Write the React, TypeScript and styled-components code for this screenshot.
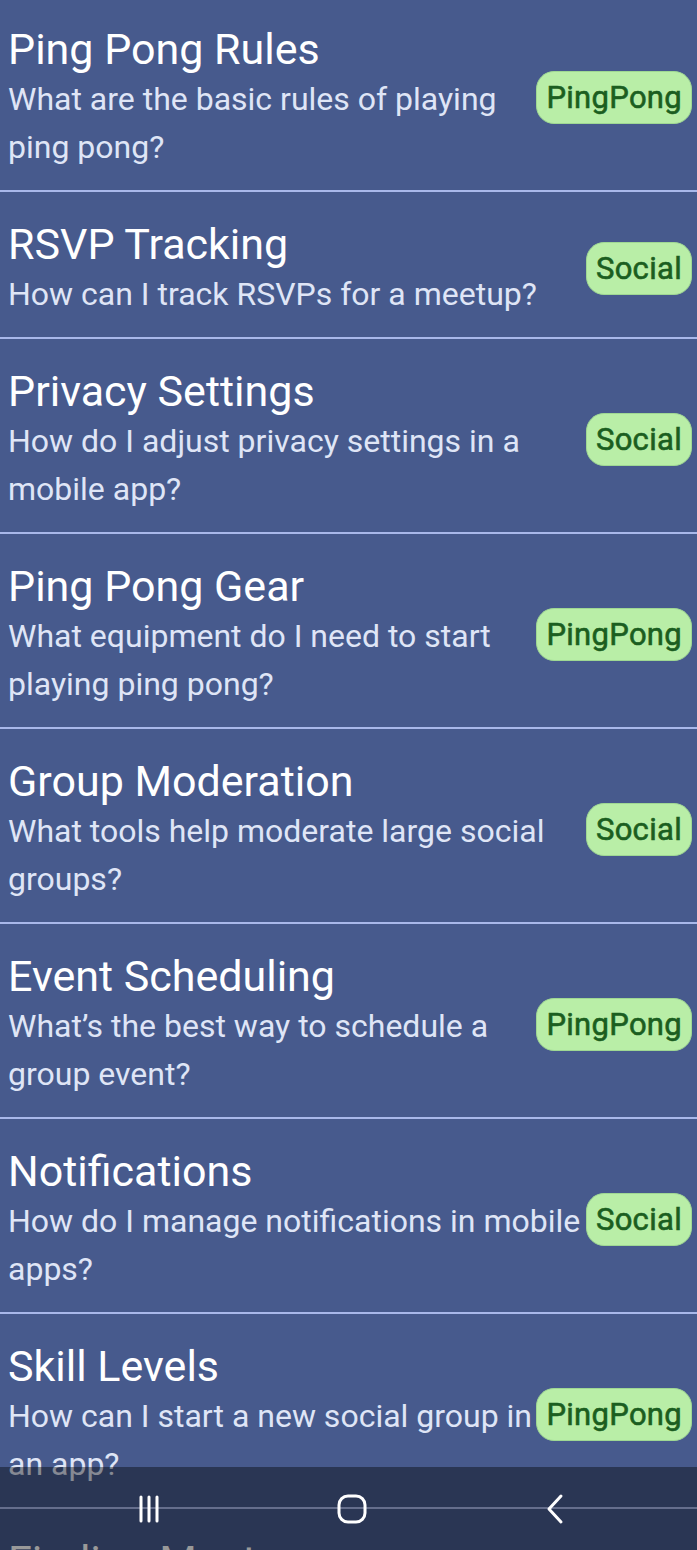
import React from "react";
import styled, { createGlobalStyle } from "styled-components";

const GlobalStyle = createGlobalStyle`
  html, body {
    margin: 0;
    padding: 0;
    background: #475a8d;
  }
  body {
    font-family: Roboto, "Noto Sans", "Liberation Sans", sans-serif;
    -webkit-font-smoothing: antialiased;
  }
`;

const Screen = styled.div`
  width: 697px;
  height: 1550px;
  overflow: hidden;
  background: #475a8d;
  position: relative;
`;

const List = styled.ul`
  list-style: none;
  margin: -3px 0 0 0;
  padding: 0;
`;

const Row = styled.li`
  display: flex;
  align-items: center;
  padding: 26px 5px 19px 8px;
  border-bottom: 2px solid #a9b8ea;
`;

const TextCol = styled.div`
  flex: 1;
  min-width: 0;
  display: flex;
  flex-direction: column;
`;

const Title = styled.div`
  color: #ffffff;
  font-size: 43px;
  line-height: 52px;
  font-weight: 400;
`;

const Desc = styled.div`
  color: #dfe5f6;
  font-size: 32px;
  line-height: 48px;
  font-weight: 400;
`;

const Badge = styled.span<{ $kind: "PingPong" | "Social" }>`
  flex: none;
  display: inline-flex;
  align-items: center;
  height: 53px;
  box-sizing: border-box;
  padding: 0 9px;
  border-radius: 18px;
  background: #b9eea7;
  border: 1px solid #9fd893;
  color: #1b5e20;
  font-size: 31px;
  font-weight: 400;
  -webkit-text-stroke: 0.6px #1b5e20;
  letter-spacing: 0.3px;
`;

const NavBar = styled.nav`
  position: fixed;
  left: 0;
  right: 0;
  bottom: 0;
  height: 83px;
  background: rgba(0, 0, 0, 0.4);
  display: flex;
  justify-content: center;
  align-items: center;
  padding-left: 7px;
`;

const NavButton = styled.div`
  width: 203px;
  height: 83px;
  display: flex;
  align-items: center;
  justify-content: center;
`;

type Item = { title: string; desc: string; tag: "PingPong" | "Social" };

const items: Item[] = [
  { title: "Ping Pong Rules", desc: "What are the basic rules of playing ping pong?", tag: "PingPong" },
  { title: "RSVP Tracking", desc: "How can I track RSVPs for a meetup?", tag: "Social" },
  { title: "Privacy Settings", desc: "How do I adjust privacy settings in a mobile app?", tag: "Social" },
  { title: "Ping Pong Gear", desc: "What equipment do I need to start playing ping pong?", tag: "PingPong" },
  { title: "Group Moderation", desc: "What tools help moderate large social groups?", tag: "Social" },
  { title: "Event Scheduling", desc: "What\u2019s the best way to schedule a group event?", tag: "PingPong" },
  { title: "Notifications", desc: "How do I manage notifications in mobile apps?", tag: "Social" },
  { title: "Skill Levels", desc: "How can I start a new social group in an app?", tag: "PingPong" },
  { title: "Finding Meetups", desc: "How do I find meetups near me?", tag: "Social" },
];

const RecentsIcon = () => (
  <svg width="30" height="30" viewBox="0 0 30 30" fill="none" stroke="#fff" strokeWidth="3" strokeLinecap="round">
    <line x1="7" y1="3" x2="7" y2="27" />
    <line x1="15" y1="3" x2="15" y2="27" />
    <line x1="23" y1="3" x2="23" y2="27" />
  </svg>
);

const HomeIcon = () => (
  <svg width="32" height="32" viewBox="0 0 32 32" fill="none" stroke="#fff" strokeWidth="3">
    <rect x="3" y="3" width="26" height="26" rx="9" />
  </svg>
);

const BackIcon = () => (
  <svg width="22" height="32" viewBox="0 0 22 32" fill="none" stroke="#fff" strokeWidth="3" strokeLinecap="round" strokeLinejoin="round">
    <polyline points="17,3 5,16 17,29" />
  </svg>
);

export default function App() {
  return (
    <Screen>
      <GlobalStyle />
      <List>
        {items.map((it) => (
          <Row key={it.title}>
            <TextCol>
              <Title>{it.title}</Title>
              <Desc>{it.desc}</Desc>
            </TextCol>
            <Badge $kind={it.tag}>{it.tag}</Badge>
          </Row>
        ))}
      </List>
      <NavBar>
        <NavButton><RecentsIcon /></NavButton>
        <NavButton><HomeIcon /></NavButton>
        <NavButton><BackIcon /></NavButton>
      </NavBar>
    </Screen>
  );
}
